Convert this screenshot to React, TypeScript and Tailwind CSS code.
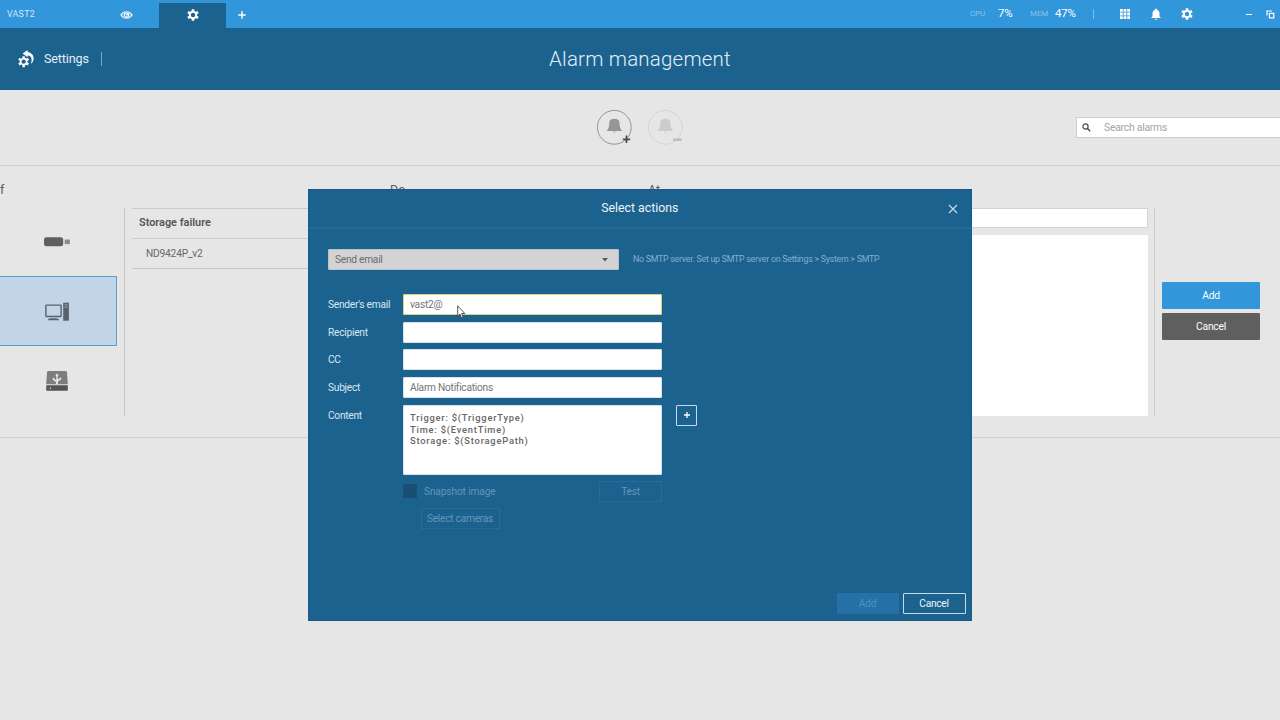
import React from 'react';
import { MdNotifications } from 'react-icons/md';

const GearIcon = ({ size = 12 }: { size?: number }) => (
  <svg width={size} height={size} viewBox="0 0 24 24" fill="none" stroke="white">
    <circle cx="12" cy="12" r="6.4" strokeWidth="4" />
    <path
      d="M12 0.3v4.5M12 19.2v4.5M1.9 6.15l3.9 2.25M18.2 15.6l3.9 2.25M22.1 6.15l-3.9 2.25M5.8 15.6l-3.9 2.25"
      strokeWidth="5.2"
    />
  </svg>
);

const GridIcon = () => (
  <svg width="10" height="10" viewBox="0 0 10 10" fill="white">
    <path d="M0 0h2.8v2.8H0zM3.6 0h2.8v2.8H3.6zM7.2 0H10v2.8H7.2zM0 3.6h2.8v2.8H0zM3.6 3.6h2.8v2.8H3.6zM7.2 3.6H10v2.8H7.2zM0 7.2h2.8V10H0zM3.6 7.2h2.8V10H3.6zM7.2 7.2H10V10H7.2z" />
  </svg>
);

const SearchIcon = () => (
  <svg width="9" height="9" viewBox="0 0 9 9" fill="none" stroke="#4d4d4d">
    <circle cx="3.5" cy="3.5" r="2.6" strokeWidth="1.2" />
    <path d="M5.4 5.4l2.8 2.8" strokeWidth="1.4" />
  </svg>
);

const EyeIcon = () => (
  <svg width="13" height="8" viewBox="0 0 13 8" fill="white">
    <path d="M4.2.7C2.6 1.3 1.1 2.5.3 4c.8 1.5 2.3 2.7 3.9 3.3L4.6 6.5C3.3 5.9 2.5 5.1 2 4c.5-1.1 1.3-1.9 2.6-2.5zM8.8.7c1.6.6 3.1 1.8 3.9 3.3-.8 1.5-2.3 2.7-3.9 3.3l-.4-.8C9.7 5.9 10.5 5.1 11 4c-.5-1.1-1.3-1.9-2.6-2.5z" />
    <circle cx="6.5" cy="4" r="2.2" fill="none" stroke="white" strokeWidth="1.3" />
    <circle cx="6.9" cy="3.7" r="0.9" />
    <path d="M4 1c1.6-.7 3.4-.7 5 0M4 7c1.6.7 3.4.7 5 0" fill="none" stroke="white" strokeWidth="0.7" />
  </svg>
);

const PlusIcon = ({ className }: { className?: string }) => (
  <svg width="8" height="8" viewBox="0 0 8 8" className={className}>
    <path d="M4 0.3v7.4M0.3 4h7.4" stroke="currentColor" strokeWidth="1.5" />
  </svg>
);

const BackToSettingsIcon = () => (
  <svg width="17" height="20" viewBox="0 0 17 20" fill="none" stroke="white">
    <path d="M4.6 4.5 9.6 1v2.1c3.7.5 6 3.2 6 6.4 0 2.4-1.1 4.3-2.8 5.3.7-1.4 1-2.9.8-4.5-.3-2.2-1.7-3.5-4-3.7v1.6z" fill="white" stroke="none" />
    <g transform="translate(0 7) scale(0.47)">
      <circle cx="12" cy="12" r="6.4" strokeWidth="3.6" />
      <path
        d="M12 0.3v4.5M12 19.2v4.5M1.9 6.15l3.9 2.25M18.2 15.6l3.9 2.25M22.1 6.15l-3.9 2.25M5.8 15.6l-3.9 2.25"
        strokeWidth="5"
      />
    </g>
  </svg>
);

const RestoreIcon = () => (
  <svg width="9" height="9" viewBox="0 0 9 9" fill="none" stroke="white" strokeWidth="1.2">
    <path d="M1 5.5V1h5M3.4 3.4h4.4v4.4H3.4z" />
  </svg>
);

const AlarmIcon = ({ type }: { type: 'add' | 'remove' }) => (
  <svg width="38" height="38" viewBox="0 0 38 38" className={type === 'add' ? 'text-[#484848]' : 'text-[#bdbdbd]'}>
    <circle cx="18.3" cy="18.3" r="16.9" fill="none" stroke={type === 'add' ? '#8c8c8c' : '#d2d2d2'} strokeWidth="0.9" />
    <path d="M12.6 18.7c.6-1.5.6-3.2.6-4.9 0-2.900 1.900-4 5.100-4s5.200 1.100 5.200 4c0 1.700.1 3.400.6 4.900.4 1.200 1.500 2.200 1.900 3.200H10.700c.4-1 1.500-2 1.900-3.200z" fill={type === 'add' ? '#969696' : '#cccccc'} />
    <path d="M16.8 22.6h3l-1.5 1.7z" fill={type === 'add' ? '#aaaaaa' : '#d4d4d4'} />
    {type === 'add' ? (
      <path d="M30.5 26.6v7.4M26.8 30.3h7.4" stroke="currentColor" strokeWidth="1.7" />
    ) : (
      <path d="M26 30.7h8.5" stroke="currentColor" strokeWidth="2.6" />
    )}
  </svg>
);

const UsbStickIcon = () => (
  <svg width="28" height="12" viewBox="0 0 28 12">
    <rect x="1" y="1.3" width="19.2" height="9" rx="2.5" fill="#5f5f5f" />
    <rect x="21.7" y="3.5" width="5.2" height="4.6" fill="#8c8c8c" />
  </svg>
);

const ComputerIcon = () => (
  <svg width="26" height="20" viewBox="0 0 26 20">
    <rect x="1.9" y="3.1" width="15.2" height="11.4" rx="0.6" fill="none" stroke="#58626b" strokeWidth="1.4" />
    <rect x="5.5" y="16.3" width="8" height="1.5" fill="#58626b" />
    <rect x="4" y="17" width="11" height="1.3" rx="0.6" fill="#58626b" />
    <rect x="19.2" y="0.7" width="5.7" height="18" fill="#58626b" />
    <path d="M20.5 2.9h3.1M20.5 5.1h3.1" stroke="#a9bccd" strokeWidth="0.8" />
  </svg>
);

const DriveIcon = () => (
  <svg width="24" height="22" viewBox="0 0 24 22">
    <path d="M3.6 1h16.8c1 0 1.5.6 1.6 1.5l.8 11.8H1.2L2 2.5C2.1 1.600 2.600 1 3.600 1z" fill="#7d7d7d" />
    <path d="M1.2 15.3h21.6v4.6c0 .6-.3.9-.9.9H2.1c-.6 0-.9-.3-.9-.9z" fill="#555555" />
    <circle cx="5.4" cy="18.3" r="0.8" fill="#dddddd" />
    <path d="M12 5v8.5M8.600 7.800v1.700l3.400 2M15.400 7.500v1.500l-3.400 2" fill="none" stroke="#e6e6e6" strokeWidth="1.5" />
    <path d="M12 3.3l1.7 2.5h-3.4z" fill="#e6e6e6" />
    <circle cx="12" cy="13" r="1.2" fill="#e6e6e6" />
  </svg>
);

const fields = [
  { label: "Sender's email", value: 'vast2@', focused: true },
  { label: 'Recipient', value: '' },
  { label: 'CC', value: '' },
  { label: 'Subject', value: 'Alarm Notifications' },
];

const devices = [
  { name: 'usb', icon: <UsbStickIcon /> },
  { name: 'computer', icon: <ComputerIcon />, selected: true },
  { name: 'drive', icon: <DriveIcon /> },
];

const TopBar = () => (
  <div className="flex h-7 items-start bg-[#3296da] text-white">
    <div className="flex h-7 w-[159px] items-center">
      <span className="ml-[7px] w-[113px] text-[8.8px] leading-7 tracking-[0.3px] text-[#d3e9f8]">VAST2</span>
      <span className="mt-0.5"><EyeIcon /></span>
    </div>
    <div className="mt-[3px] flex h-[25px] w-[67px] items-center justify-center bg-[#1c628f] pb-px">
      <GearIcon size={12} />
    </div>
    <PlusIcon className="ml-3 mt-[11px]" />
    <div className="ml-auto flex h-7 items-center">
      <span className="w-7 text-[8px] tracking-[-0.1px] text-[#86c1ea]">CPU</span>
      <span className="w-8 text-[11.5px] tracking-[-0.2px]">7%</span>
      <span className="w-[25px] text-[8px] tracking-[-0.1px] text-[#86c1ea]">MEM</span>
      <span className="w-[38px] text-[11.5px] tracking-[-0.2px]">47%</span>
      <span className="h-2.5 w-px bg-[#7bbde9]" />
      <span className="ml-[26px]"><GridIcon /></span>
      <MdNotifications size={14} className="ml-[19px]" />
      <span className="ml-[18px]"><GearIcon size={12} /></span>
      <span className="ml-[53px] h-px w-1.5 bg-white" />
      <span className="ml-[14px]"><RestoreIcon /></span>
      <span className="w-[5px]" />
    </div>
  </div>
);

const Header = () => (
  <header className="grid h-[62px] grid-cols-3 items-center bg-[#1c628f] text-[#e2eef6]">
    <div className="flex items-center pl-[18px]">
      <BackToSettingsIcon />
      <span className="ml-[9px] w-11 whitespace-nowrap text-[12.6px] tracking-[-0.15px]">Settings</span>
      <span className="ml-[13px] h-[14px] w-px bg-[#7ca6c2]" />
    </div>
    <h1 className="text-center text-[20.5px] font-light tracking-[0.2px]">Alarm management</h1>
  </header>
);

const Toolbar = () => (
  <div className="flex h-[75px] items-center">
    <div className="ml-[596px] flex gap-[13px]">
      <AlarmIcon type="add" />
      <AlarmIcon type="remove" />
    </div>
    <div className="ml-auto flex h-[21px] w-[204px] items-center border border-r-0 border-[#cccccc] bg-white pl-[5px]">
      <SearchIcon />
      <span className="ml-[13px] text-[10.4px] tracking-[-0.25px] text-[#a4a4a4]">Search alarms</span>
    </div>
  </div>
);

const Conditions = () => (
  <section className="h-[273px] border-y-[1.5px] border-[#d0d0d0]">
    <div className="flex h-[42px] items-center pt-[6px] text-[12.5px] text-[#5c5c5c]">
      <span className="w-[390px]">f</span>
      <span className="w-[258px]">Do</span>
      <span>At</span>
    </div>
    <div className="flex h-[208px]">
      <div className="flex w-[125px] flex-col border-r border-[#c8c8c8]">
        {devices.map((device) => (
          <div
            key={device.name}
            className={`flex h-[70px] w-[117px] shrink-0 items-center justify-center pr-[3px] first:h-[68px] ${
              device.selected ? 'border border-l-0 border-[#5b9bcd] bg-[#c1d5e7] pt-0.5' : ''
            }`}
          >
            {device.icon}
          </div>
        ))}
      </div>
      <div className="ml-[7px] w-[258px] text-[#555555]">
        <div className="flex h-[31px] items-center border-y border-[#cbcbcb] pl-[7px] text-[10.9px] font-semibold">Storage failure</div>
        <div className="flex h-[30px] items-center border-b border-[#c6c6c6] pl-3.5 text-[10.2px] tracking-[-0.2px] text-[#666666]">ND9424P_v2</div>
      </div>
      <div className="ml-auto flex w-[200px] flex-col gap-[7px]">
        <div className="h-5 border border-[#d4d4d4] bg-white" />
        <div className="flex-1 bg-white" />
      </div>
      <div className="ml-1.5 flex w-[126px] flex-col gap-1 border-l border-[#cccccc] pl-[7px] pt-[74px] text-[10.3px] tracking-[-0.25px] text-white">
        <button className="h-[27px] w-[98px] rounded-[1px] bg-[#3296da]">Add</button>
        <button className="h-[27px] w-[98px] rounded-[1px] bg-[#5f5f5f]">Cancel</button>
      </div>
    </div>
  </section>
);

const SelectActionsDialog = () => (
  <div className="absolute left-[307.5px] top-[189px] flex h-[432px] w-[664.5px] flex-col border border-[#1b5a84] bg-[#1c628f] text-[#d9e8f2]">
    <div className="relative flex h-[39px] shrink-0 items-center justify-center border-b-2 border-[#276c99]">
      <h2 className="text-[12.3px] text-[#edf5fa]">Select actions</h2>
      <svg width="10" height="10" viewBox="0 0 10 10" className="absolute right-[13px] top-[13.5px]">
        <path d="M1 1l8 8M9 1l-8 8" stroke="#c5dae8" strokeWidth="1.1" />
      </svg>
    </div>
    <div className="flex flex-1 flex-col pl-[19.5px] text-[10.2px] tracking-[-0.26px]">
      <div className="mt-5 flex items-center">
        <div className="flex h-[21px] w-[291px] items-center justify-between rounded-[1px] border border-[#b9c3ca] bg-[#d3d3d3] pl-1.5 pr-2.5 text-[#6c6c6c]">
          Send email
          <svg width="6" height="4" viewBox="0 0 6 4"><path d="M0 0h6L3 3.5z" fill="#5a5a5a" /></svg>
        </div>
        <span className="ml-[14px] text-[8.8px] tracking-[-0.24px] text-[#84afcc]">No SMTP server. Set up SMTP server on Settings &gt; System &gt; SMTP</span>
      </div>
      <div className="mt-6 flex flex-col gap-[6.7px]">
        {fields.map((field) => (
          <div key={field.label} className="flex h-[21px] items-center">
            <label className="w-[75px] whitespace-nowrap">{field.label}</label>
            <div
              className={`flex h-[21px] w-[259px] items-center rounded-[1px] border bg-white pl-1.5 text-[#747474] ${
                field.focused ? 'border-[#d8d27a]' : 'border-[#d5e4ee]'
              }`}
            >
              {field.value}
            </div>
          </div>
        ))}
        <div className="flex">
          <label className="w-[75px] leading-[21px]">Content</label>
          <div className="h-[70px] w-[259px] rounded-[1px] border border-[#d5e4ee] bg-white pl-1.5 pt-1.5 text-[9.3px] font-medium leading-[11.8px] tracking-[0.8px] text-[#666666]">
            <p>Trigger: $(TriggerType)</p>
            <p>Time: $(EventTime)</p>
            <p>Storage: $(StoragePath)</p>
          </div>
          <button className="ml-[14px] flex h-[21px] w-[21px] items-center justify-center rounded-[1px] border border-[#c4dbea] text-white">
            <svg width="6" height="6" viewBox="0 0 6 6"><path d="M3 0v6M0 3h6" stroke="currentColor" strokeWidth="1.3" /></svg>
          </button>
        </div>
      </div>
      <div className="mt-[6px] flex w-[334px] items-center pl-[75px] text-[#6296b8]">
        <span className="h-[14px] w-[14px] bg-[#194f75]" />
        <span className="ml-[7px] tracking-[-0.15px]">Snapshot image</span>
        <button className="ml-auto h-[21px] w-[63px] border border-[#276b99]">Test</button>
      </div>
      <button className="ml-[92.5px] mt-[6.5px] h-[21px] w-[79px] border border-[#276b99] text-[#6296b8]">Select cameras</button>
      <div className="mb-[6px] mt-auto flex justify-end gap-1 pr-[5.5px]">
        <button className="h-[21px] w-[62px] bg-[#2571a7] text-[#4f91bd]">Add</button>
        <button className="h-[21px] w-[63px] rounded-[1px] border border-[#c4dbea] text-[#edf5fa]">Cancel</button>
      </div>
    </div>
  </div>
);

const App: React.FC = () => {
  return (
    <div className="relative h-[720px] w-[1280px] overflow-hidden bg-[#e6e6e6] font-['Roboto',sans-serif]">
      <TopBar />
      <Header />
      <Toolbar />
      <Conditions />
      <SelectActionsDialog />
      <svg width="9" height="14" viewBox="0 0 9 14" className="absolute left-[457px] top-[305px]">
        <path d="M.7.8v10.4l2.3-2.2 1.5 3.9 1.7-.7-1.6-3.7h3.2z" fill="white" stroke="#444444" strokeWidth="0.9" />
      </svg>
    </div>
  );
};

export default App;
